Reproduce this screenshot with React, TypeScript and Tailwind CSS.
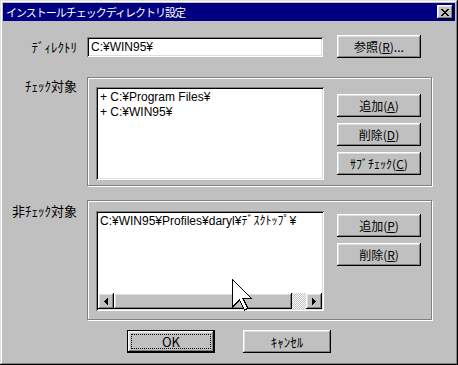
import type { ReactNode } from "react";

const raised =
  "bg-[#c0c0c0] shadow-[inset_-1px_-1px_#000,inset_1px_1px_#fff,inset_-2px_-2px_#808080,inset_2px_2px_#dfdfdf]";
const sunken =
  "bg-white shadow-[inset_1px_1px_#808080,inset_-1px_-1px_#fff,inset_2px_2px_#000,inset_-2px_-2px_#dfdfdf]";
const etched = "border border-[#808080] shadow-[inset_1px_1px_#fff,1px_1px_#fff]";
const latin = "font-['Liberation_Sans','Noto_Sans_CJK_JP',sans-serif]";

const closeGlyph = [
  "XX....XX",
  ".XX..XX.",
  "..XXXX..",
  "...XX...",
  "..XXXX..",
  ".XX..XX.",
  "XX....XX",
];

function PixelGlyph({ rows }: { rows: string[] }) {
  return (
    <svg width={rows[0].length} height={rows.length} shapeRendering="crispEdges">
      {rows.map((row, y) =>
        row.split("").map((c, x) => (c === "X" ? <rect key={`${x}-${y}`} x={x} y={y} width="1" height="1" fill="#000" /> : null))
      )}
    </svg>
  );
}

const leftArrow = ["...X", "..XX", ".XXX", "XXXX", ".XXX", "..XX", "...X"];
const rightArrow = ["X...", "XX..", "XXX.", "XXXX", "XXX.", "XX..", "X..."];

function Btn({ children, className = "" }: { children: ReactNode; className?: string }) {
  return (
    <button className={`flex items-center justify-center text-[12px] leading-none text-black ${raised} ${className}`}>
      {children}
    </button>
  );
}

function Label({ children, className = "" }: { children: ReactNode; className?: string }) {
  return <div className={`w-[74px] shrink-0 text-right text-[13px] leading-[16px] ${className}`}>{children}</div>;
}

export default function App() {
  return (
    <div className="relative w-[458px] h-[365px] p-[3px] bg-[#c0c0c0] text-black font-['Noto_Sans_CJK_JP',sans-serif] shadow-[inset_-1px_-1px_#000,inset_1px_1px_#dfdfdf,inset_-2px_-2px_#808080,inset_2px_2px_#fff] overflow-hidden">
      {/* title bar */}
      <div className="flex items-center h-[18px] bg-[#000080] pl-[3px] pr-[2px]">
        <span className="text-white text-[11px] leading-none tracking-[-1px]">
          インストールチェックディレクトリ設定
        </span>
        <div className={`ml-auto w-[16px] h-[14px] flex items-center justify-center ${raised}`}>
          <PixelGlyph rows={closeGlyph} />
        </div>
      </div>

      {/* directory row */}
      <div className="flex items-center mt-[14px] h-[23px]">
        <Label>ﾃﾞｨﾚｸﾄﾘ</Label>
        <div className={`ml-[10px] w-[236px] h-[20px] flex items-center pl-[4px] text-[12px] ${latin} ${sunken}`}>C:¥WIN95¥</div>
        <Btn className="ml-[14px] w-[84px] h-[23px]">
          参照(<u>R</u>)...
        </Btn>
      </div>

      {/* check targets */}
      <div className="flex mt-[19px]">
        <Label className="pt-[1px]">ﾁｪｯｸ対象</Label>
        <div className={`ml-[10px] w-[345px] h-[109px] flex pl-[8px] pt-[9px] ${etched}`}>
          <div className={`w-[228px] h-[93px] p-[2px] text-[12px] leading-[15px] ${latin} ${sunken}`}>
            <div className="pl-[2px] pt-[1px]">+ C:¥Program Files¥</div>
            <div className="pl-[2px]">+ C:¥WIN95¥</div>
          </div>
          <div className="ml-[13px] mt-[7px] flex flex-col gap-[6px]">
            <Btn className="w-[84px] h-[23px]">
              追加(<u>A</u>)
            </Btn>
            <Btn className="w-[84px] h-[23px]">
              削除(<u>D</u>)
            </Btn>
            <Btn className="w-[84px] h-[23px]">
              ｻﾌﾞﾁｪｯｸ(<u>C</u>)
            </Btn>
          </div>
        </div>
      </div>

      {/* non-check targets */}
      <div className="flex mt-[14px]">
        <Label className="pt-[3px]">非ﾁｪｯｸ対象</Label>
        <div className={`ml-[10px] w-[345px] h-[120px] flex pl-[8px] pt-[10px] ${etched}`}>
          <div className={`w-[228px] h-[100px] p-[2px] flex flex-col text-[12px] leading-[15px] ${latin} ${sunken}`}>
            <div className="pl-[2px] pt-[1px] whitespace-nowrap overflow-hidden">C:¥WIN95¥Profiles¥daryl¥ﾃﾞｽｸﾄｯﾌﾟ¥</div>
            <div className="mt-auto flex h-[16px]">
              <div className={`w-[16px] h-[16px] flex items-center justify-center ${raised}`}>
                <PixelGlyph rows={leftArrow} />
              </div>
              <div className={`w-[178px] h-[16px] ${raised}`} />
              <div className="flex-1 bg-[image:conic-gradient(#fff_25%,#c0c0c0_0_50%,#fff_0_75%,#c0c0c0_0)] bg-[length:2px_2px]" />
              <div className={`w-[16px] h-[16px] flex items-center justify-center ${raised}`}>
                <PixelGlyph rows={rightArrow} />
              </div>
            </div>
          </div>
          <div className="ml-[13px] mt-[3px] flex flex-col gap-[6px]">
            <Btn className="w-[84px] h-[23px]">
              追加(<u>P</u>)
            </Btn>
            <Btn className="w-[84px] h-[23px]">
              削除(<u>R</u>)
            </Btn>
          </div>
        </div>
      </div>

      {/* bottom buttons */}
      <div className="flex justify-center gap-[28px] mt-[10px]">
        <div className="w-[88px] h-[23px] border border-black">
          <button className={`w-full h-full p-[3px] flex ${raised}`}>
            <span className="flex-1 flex items-center justify-center border border-dotted border-black text-[13px] leading-none">OK</span>
          </button>
        </div>
        <Btn className="w-[88px] h-[23px] text-[13px]">ｷｬﾝｾﾙ</Btn>
      </div>

      {/* mouse pointer */}
      <svg className="absolute left-[232px] top-[279px]" width="20" height="32" viewBox="0 0 12 19" shapeRendering="crispEdges">
        <path d="M0.5 0.5 L0.5 16.5 L4.5 12.5 L7.5 18.5 L9.5 17.5 L6.5 11.5 L11.5 11.5 Z" fill="#fff" stroke="#000" strokeWidth="0.7" />
      </svg>
    </div>
  );
}
